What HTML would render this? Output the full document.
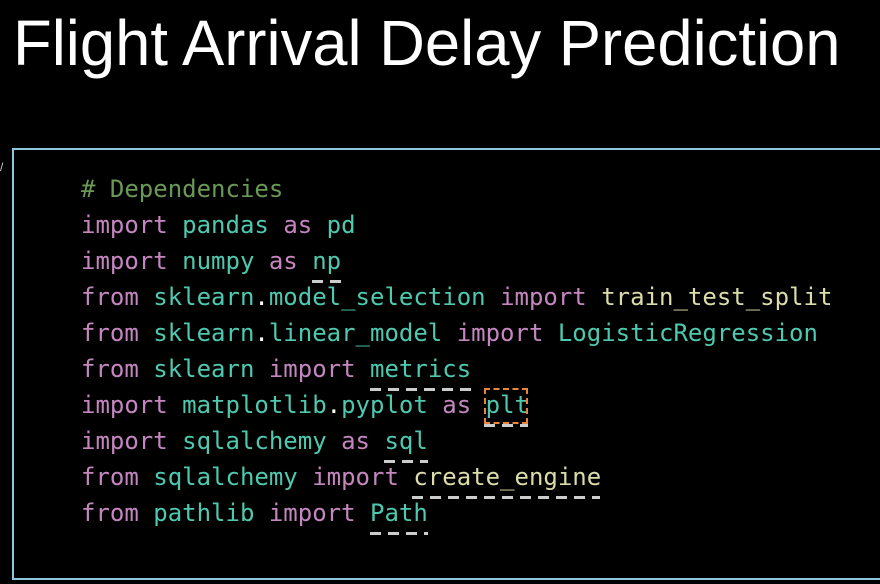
<!DOCTYPE html>
<html><head><meta charset="utf-8"><style>
html,body{margin:0;padding:0;background:#000;width:880px;height:584px;overflow:hidden;position:relative}
h1{position:absolute;left:13px;top:6px;margin:0;font:400 64px "Liberation Sans",sans-serif;color:#fff;white-space:nowrap;transform-origin:0 0;transform:scaleX(0.99)}
.box{position:absolute;left:12px;top:148px;width:880px;height:432px;border:2px solid #8cc8dc;box-sizing:border-box}
.code{position:absolute;left:81px;top:171px;font:24px/36px "DejaVu Sans Mono",monospace;white-space:pre;color:#d4d4d4}
.k{color:#c586c0}.m{color:#4ec9b0}.c{color:#6a9955}.f{color:#dcdcaa}.w{color:#fff}
.u{position:absolute;height:3px;background:repeating-linear-gradient(90deg,#ccc 0 11px,transparent 11px 18px)}
.ob{position:absolute;border:2px dashed #e8873a}
</style></head><body>
<h1>Flight Arrival Delay Prediction</h1>
<div style="position:absolute;left:0;top:160px;color:#ccc;font:12px 'Liberation Sans',sans-serif">/</div>
<div class="box"></div>
<div class="code"><span class="c"># Dependencies</span>
<span class="k">import</span> <span class="m">pandas</span> <span class="k">as</span> <span class="m">pd</span>
<span class="k">import</span> <span class="m">numpy</span> <span class="k">as</span> <span class="m">np</span>
<span class="k">from</span> <span class="m">sklearn</span><span class="w">.</span><span class="m">model_selection</span> <span class="k">import</span> <span class="f">train_test_split</span>
<span class="k">from</span> <span class="m">sklearn</span><span class="w">.</span><span class="m">linear_model</span> <span class="k">import</span> <span class="m">LogisticRegression</span>
<span class="k">from</span> <span class="m">sklearn</span> <span class="k">import</span> <span class="m">metrics</span>
<span class="k">import</span> <span class="m">matplotlib</span><span class="w">.</span><span class="m">pyplot</span> <span class="k">as</span> <span class="m">plt</span>
<span class="k">import</span> <span class="m">sqlalchemy</span> <span class="k">as</span> <span class="m">sql</span>
<span class="k">from</span> <span class="m">sqlalchemy</span> <span class="k">import</span> <span class="f">create_engine</span>
<span class="k">from</span> <span class="m">pathlib</span> <span class="k">import</span> <span class="m">Path</span></div>
<div class="u" style="left:312px;top:280px;width:29px"></div>
<div class="u" style="left:370px;top:388px;width:101px"></div>
<div class="ob" style="left:484px;top:388px;width:40px;height:32px"></div>
<div class="u" style="left:484px;top:424px;width:44px"></div>
<div class="u" style="left:384px;top:460px;width:44px"></div>
<div class="u" style="left:412px;top:496px;width:188px"></div>
<div class="u" style="left:370px;top:532px;width:58px"></div>
</body></html>
